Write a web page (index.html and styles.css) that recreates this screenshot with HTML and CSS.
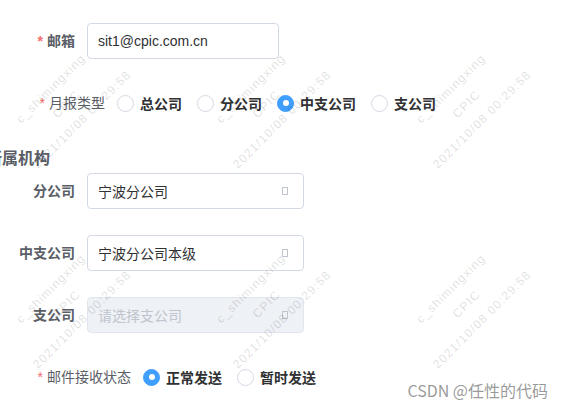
FILE: index.html
```html
<!DOCTYPE html>
<html lang="zh-CN">
<head>
<meta charset="utf-8">
<title>表单</title>
<link rel="stylesheet" href="styles.css">
</head>
<body>
<div class="page">
  <form class="form">
    <div class="item">
      <label class="label label--req label--bold">邮箱</label>
      <div class="input input--email"><span class="input-text">sit1@cpic.com.cn</span></div>
    </div>

    <div class="item">
      <label class="label label--req label--wide">月报类型</label>
      <div class="radios">
        <span class="radio"><span class="radio-dot"></span><span class="radio-text">总公司</span></span>
        <span class="radio"><span class="radio-dot"></span><span class="radio-text">分公司</span></span>
        <span class="radio"><span class="radio-dot radio-dot--on"></span><span class="radio-text">中支公司</span></span>
        <span class="radio"><span class="radio-dot"></span><span class="radio-text">支公司</span></span>
      </div>
    </div>

    <h3 class="section">所属机构</h3>

    <div class="item">
      <label class="label label--bold">分公司</label>
      <div class="input input--select"><span class="input-text">宁波分公司</span><span class="caret"></span></div>
    </div>

    <div class="item">
      <label class="label label--bold">中支公司</label>
      <div class="input input--select"><span class="input-text">宁波分公司本级</span><span class="caret"></span></div>
    </div>

    <div class="item">
      <label class="label label--bold">支公司</label>
      <div class="input input--select input--disabled"><span class="input-text input-text--ph">请选择支公司</span><span class="caret"></span></div>
    </div>

    <div class="item">
      <label class="label label--req label--wider">邮件接收状态</label>
      <div class="radios">
        <span class="radio"><span class="radio-dot radio-dot--on"></span><span class="radio-text">正常发送</span></span>
        <span class="radio"><span class="radio-dot"></span><span class="radio-text">暂时发送</span></span>
      </div>
    </div>
  </form>

  <div class="watermarks" aria-hidden="true">
    <div class="wm"><div class="wm-text"><span>c_shimingxing</span><span>CPIC</span><span>2021/10/08 00:29:58</span></div></div>
    <div class="wm"><div class="wm-text"><span>c_shimingxing</span><span>CPIC</span><span>2021/10/08 00:29:58</span></div></div>
    <div class="wm"><div class="wm-text"><span>c_shimingxing</span><span>CPIC</span><span>2021/10/08 00:29:58</span></div></div>
    <div class="wm"><div class="wm-text"><span>c_shimingxing</span><span>CPIC</span><span>2021/10/08 00:29:58</span></div></div>
    <div class="wm"><div class="wm-text"><span>c_shimingxing</span><span>CPIC</span><span>2021/10/08 00:29:58</span></div></div>
    <div class="wm"><div class="wm-text"><span>c_shimingxing</span><span>CPIC</span><span>2021/10/08 00:29:58</span></div></div>
  </div>

  <div class="csdn">CSDN @任性的代码</div>
</div>
</body>
</html>
```

FILE: styles.css
```css
html, body {
  margin: 0;
  padding: 0;
  overflow: hidden;
  background: #ffffff;
}

.page {
  position: relative;
  width: 563px;
  height: 405px;
  overflow: hidden;
  font-family: "Liberation Sans", "Noto Sans CJK SC", sans-serif;
  font-size: 14px;
  color: #606266;
}

.form {
  padding-top: 23px;
  display: flex;
  flex-direction: column;
}

.item {
  display: flex;
  align-items: center;
  height: 36px;
  margin-bottom: 26px;
}

.item:last-child {
  margin-bottom: 0;
}

.label {
  width: 87px;
  flex: none;
  box-sizing: border-box;
  padding-right: 12px;
  text-align: right;
  line-height: 36px;
  color: #5a5e66;
}

.label--bold {
  font-weight: 700;
}

.label--wide {
  width: 117px;
}

.label--wider {
  width: 143px;
}

.label--req::before {
  content: "*";
  color: #f56c6c;
  margin-right: 4px;
}

.input {
  box-sizing: border-box;
  height: 36px;
  border: 1px solid #d3d9e3;
  border-radius: 4px;
  background: #fff;
  display: flex;
  align-items: center;
  padding: 0 15px 0 10px;
}

.input--email {
  width: 192px;
}

.input--select {
  width: 217px;
  justify-content: space-between;
}

.input--disabled {
  background: #eef1f6;
  border-color: #e1e6ee;
}

.input-text {
  color: #303133;
  font-size: 14px;
}

.input-text--ph {
  color: #c0c4cc;
}

.caret {
  width: 4px;
  height: 6px;
  border: 1px solid #c0c4cc;
}

.radios {
  display: flex;
  align-items: center;
}

.radio {
  display: inline-flex;
  align-items: center;
  margin-right: 15px;
}

.radio-dot {
  width: 17px;
  height: 17px;
  box-sizing: border-box;
  border: 1px solid #d3d9e3;
  border-radius: 50%;
  background: #fff;
  margin-right: 6px;
  position: relative;
}

.radio-dot--on {
  background: #409eff;
  border-color: #409eff;
}

.radio-dot--on::after {
  content: "";
  position: absolute;
  left: 50%;
  top: 50%;
  width: 6px;
  height: 6px;
  margin: -3px 0 0 -3px;
  border-radius: 50%;
  background: #fff;
}

.radio-text {
  font-weight: 700;
  color: #303133;
}

.section {
  margin: 0 0 2px -14px;
  font-size: 16px;
  line-height: 24px;
  font-weight: 700;
  color: #5a5e66;
}

.watermarks {
  position: absolute;
  left: -34px;
  top: 4px;
  display: grid;
  grid-template-columns: repeat(3, 200px);
  grid-auto-rows: 200px;
  pointer-events: none;
}

.wm {
  display: flex;
  align-items: center;
  justify-content: center;
}

.wm-text {
  transform: rotate(-45deg);
  display: flex;
  flex-direction: column;
  align-items: center;
  font-family: "Liberation Sans", sans-serif;
  font-size: 12px;
  line-height: 22px;
  letter-spacing: 1.2px;
  color: rgba(0, 0, 0, 0.14);
  white-space: nowrap;
}

.csdn {
  position: absolute;
  right: 15px;
  bottom: 5px;
  font-family: "Noto Sans CJK SC", sans-serif;
  font-size: 16px;
  color: rgba(120, 120, 120, 0.75);
  line-height: 20px;
}
```
